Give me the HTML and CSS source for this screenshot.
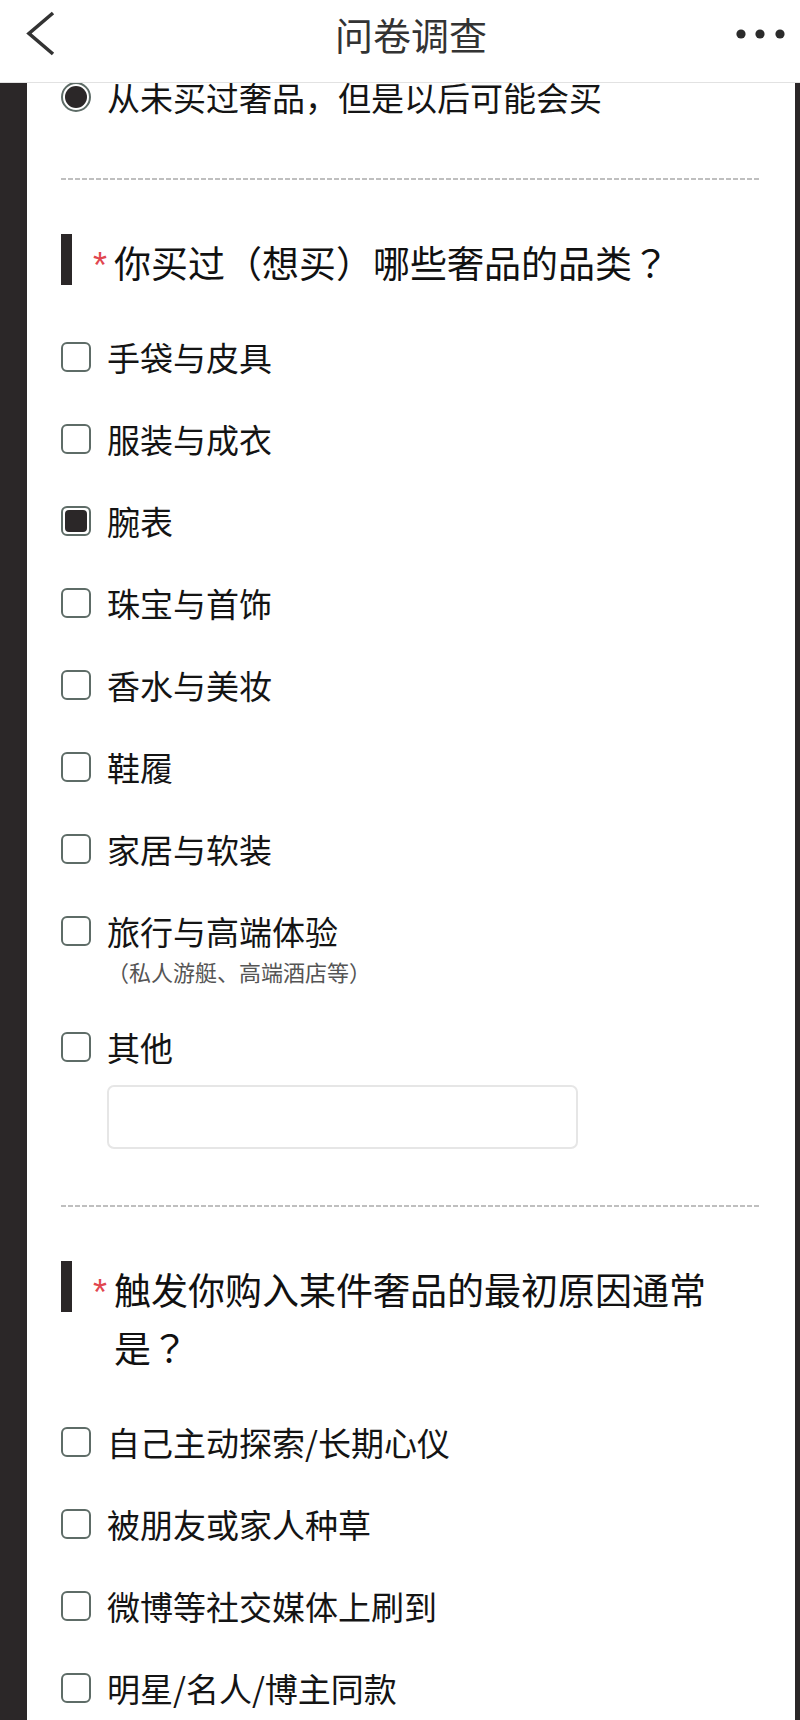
FILE: index.html
```html
<!DOCTYPE html>
<html lang="zh-CN">
<head>
    <meta charset="UTF-8">
    <meta name="viewport" content="width=device-width, initial-scale=1.0">
    <title>问卷调查</title>
    <link rel="stylesheet" href="styles.css">
</head>
<body>
    <header class="topbar">
        <div class="topbar-back">
            <svg width="30" height="46" viewBox="0 0 30 46">
                <path d="M27 2 L3 22.5 L27 43" fill="none" stroke="#333" stroke-width="3.6"/>
            </svg>
        </div>
        <h1 class="topbar-title">问卷调查</h1>
        <div class="topbar-more">
            <svg width="52" height="10" viewBox="0 0 52 10">
                <circle cx="7" cy="5" r="4.6" fill="#2b2b2b"/>
                <circle cx="26" cy="5" r="4.6" fill="#2b2b2b"/>
                <circle cx="46" cy="5" r="4.6" fill="#2b2b2b"/>
            </svg>
        </div>
    </header>

    <main class="card">
        <section class="question question-tail">
            <label class="option">
                <span class="radio checked"></span>
                <span class="option-body">
                    <span class="option-label">从未买过奢品，但是以后可能会买</span>
                </span>
            </label>
        </section>

        <div class="divider"></div>

        <section class="question">
            <div class="q-title">
                <span class="q-bar"></span>
                <span class="q-star">*</span>
                <span class="q-text">你买过（想买）哪些奢品的品类<span class="punct" lang="ja">？</span></span>
            </div>
            <label class="option">
                <span class="checkbox"></span>
                <span class="option-body"><span class="option-label">手袋与皮具</span></span>
            </label>
            <label class="option">
                <span class="checkbox"></span>
                <span class="option-body"><span class="option-label">服装与成衣</span></span>
            </label>
            <label class="option">
                <span class="checkbox checked"></span>
                <span class="option-body"><span class="option-label">腕表</span></span>
            </label>
            <label class="option">
                <span class="checkbox"></span>
                <span class="option-body"><span class="option-label">珠宝与首饰</span></span>
            </label>
            <label class="option">
                <span class="checkbox"></span>
                <span class="option-body"><span class="option-label">香水与美妆</span></span>
            </label>
            <label class="option">
                <span class="checkbox"></span>
                <span class="option-body"><span class="option-label">鞋履</span></span>
            </label>
            <label class="option">
                <span class="checkbox"></span>
                <span class="option-body"><span class="option-label">家居与软装</span></span>
            </label>
            <label class="option">
                <span class="checkbox"></span>
                <span class="option-body">
                    <span class="option-label">旅行与高端体验</span>
                    <span class="option-note">（私人游艇、高端酒店等）</span>
                </span>
            </label>
            <div class="option option-other">
                <span class="checkbox"></span>
                <span class="option-body">
                    <span class="option-label">其他</span>
                    <input type="text" class="other-input">
                </span>
            </div>
        </section>

        <div class="divider"></div>

        <section class="question">
            <div class="q-title">
                <span class="q-bar"></span>
                <span class="q-star">*</span>
                <span class="q-text">触发你购入某件奢品的最初原因通常是<span class="punct" lang="ja">？</span></span>
            </div>
            <label class="option">
                <span class="checkbox"></span>
                <span class="option-body"><span class="option-label">自己主动探索/长期心仪</span></span>
            </label>
            <label class="option">
                <span class="checkbox"></span>
                <span class="option-body"><span class="option-label">被朋友或家人种草</span></span>
            </label>
            <label class="option">
                <span class="checkbox"></span>
                <span class="option-body"><span class="option-label">微博等社交媒体上刷到</span></span>
            </label>
            <label class="option">
                <span class="checkbox"></span>
                <span class="option-body"><span class="option-label">明星/名人/博主同款</span></span>
            </label>
        </section>
    </main>
</body>
</html>
```

FILE: styles.css
```css
body {
    margin: 0;
    padding: 0;
    background-color: #2b2728;
    font-family: "Noto Sans CJK SC", "Noto Sans", sans-serif;
    color: #141414;
}

/* Top navigation bar */
.topbar {
    position: fixed;
    top: 0;
    left: 0;
    right: 0;
    z-index: 10;
    display: grid;
    grid-template-columns: 90px 1fr 68px;
    align-items: center;
    height: 68px;
    padding-bottom: 14px;
    background-color: #fff;
    border-bottom: 1px solid #e2e2e2;
}

.topbar-back {
    display: flex;
    padding-left: 26px;
}

.topbar-back svg,
.topbar-more svg {
    display: block;
}

.topbar-title {
    margin: 0;
    text-align: center;
    font-size: 38px;
    font-weight: normal;
    line-height: 52px;
    color: #333;
}

.topbar-more {
    display: flex;
    justify-content: flex-end;
    padding-right: 14px;
}

/* Survey card */
.card {
    margin: 0 5px 0 27px;
    padding: 56px 34px 0;
    background-color: #fff;
    min-height: 1720px;
    box-sizing: border-box;
}

.question {
    padding-top: 53px;
}

.question-tail {
    padding-top: 0;
}

.divider {
    height: 2px;
    margin-top: 40px;
    background: repeating-linear-gradient(90deg, #bfbfbf 0 5px, transparent 5px 7px);
}

.q-title {
    display: flex;
    align-items: baseline;
    margin-bottom: 25px;
}

.q-bar {
    align-self: flex-start;
    flex-shrink: 0;
    width: 11px;
    height: 51px;
    margin-top: 1px;
    margin-right: 21px;
    background-color: #2b2728;
}

.q-star {
    flex-shrink: 0;
    width: 21px;
    font-family: "Liberation Sans", sans-serif;
    font-size: 36px;
    line-height: 40px;
    color: #e1474f;
}

.q-text {
    flex: 1;
    padding-right: 40px;
    font-size: 37px;
    line-height: 58px;
    color: #111;
}

/* full-width question mark, centred in its cell */
.punct {
    font-family: "Noto Sans CJK JP", "Noto Sans CJK TC", "Noto Sans CJK SC", sans-serif;
    line-height: 1;
}

/* Options */
.option {
    display: flex;
    align-items: flex-start;
    gap: 16px;
    padding: 21px 0;
}

.option-body {
    display: flex;
    flex-direction: column;
}

.option-label {
    font-size: 33px;
    line-height: 40px;
}

.option-note {
    margin-top: 6px;
    font-size: 22px;
    line-height: 28px;
    color: #555;
}

.option-other {
    padding-bottom: 0;
}

.other-input {
    width: 471px;
    height: 64px;
    margin-top: 18px;
    box-sizing: border-box;
    border: 2px solid #e6e6e6;
    border-radius: 7px;
    background-color: #fff;
    outline: none;
}

.question:has(.option-other) + .divider {
    margin-top: 56px;
}

.checkbox,
.radio {
    position: relative;
    flex-shrink: 0;
    width: 30px;
    height: 30px;
    margin-top: 5px;
    box-sizing: border-box;
    border: 2.5px solid #5e6c67;
    border-radius: 6px;
}

.radio {
    border-width: 2px;
    border-radius: 50%;
}

.checkbox.checked::after,
.radio.checked::after {
    content: "";
    position: absolute;
    inset: 2px;
    background-color: #2b2728;
    border-radius: 4px;
}

.radio.checked::after {
    border-radius: 50%;
}
```
